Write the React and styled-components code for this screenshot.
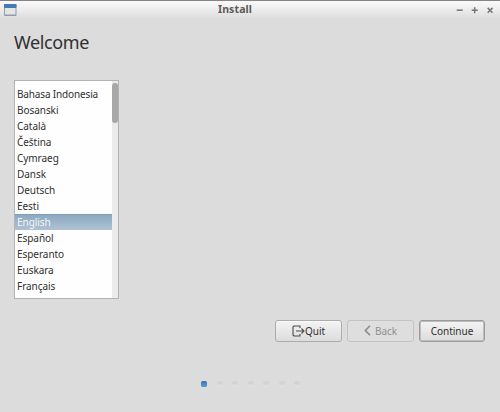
import React from 'react';
import styled, { createGlobalStyle } from 'styled-components';

const GlobalStyle = createGlobalStyle`
  * { box-sizing: border-box; }
  body { margin: 0; overflow: hidden; background: #dcdcdc; }
`;

const Window = styled.div`
  width: 500px;
  height: 412px;
  display: flex;
  flex-direction: column;
  background: #dcdcdc;
  color: #303030;
  font: 10px "Noto Sans", sans-serif;
  overflow: hidden;
`;

const TitleBar = styled.header`
  height: 19px;
  flex: none;
  display: grid;
  grid-template-columns: 50px 1fr 50px;
  align-items: center;
  padding-left: 4px;
  border-top: 1px solid #858383;
  background: linear-gradient(#fafafa, #ececec 50%, #dcdcdc);
`;

const Title = styled.div`
  text-align: center;
  font: 700 10.5px/16px "Noto Sans", sans-serif;
  letter-spacing: 0.1px;
  color: #5c5a5a;
  padding: 0 34px 2px 0;
`;

const Controls = styled.div`
  display: flex;
  justify-content: flex-end;
  padding: 0 5px 1px 0;
  gap: 5px;
`;

const Icon = styled.svg`
  display: block;
  flex: none;
  fill: none;
  stroke: ${(p) => p.$color || '#777'};
  stroke-width: ${(p) => p.$weight || 1.5};
`;

const Content = styled.main`
  flex: 1;
  display: flex;
  flex-direction: column;
  padding: 10px 15px 0 14px;
`;

const Heading = styled.h1`
  margin: 0;
  height: 51px;
  font: 400 18px/26px "Noto Sans", sans-serif;
  letter-spacing: -0.4px;
`;

const ListBox = styled.div`
  width: 105px;
  height: 219px;
  display: flex;
  overflow: hidden;
  background: #fefefe;
  border: 1px solid #b3b3b3;
`;

const Languages = styled.ul`
  width: 97px;
  margin: 0;
  padding: 5px 0 0;
  list-style: none;
`;

const Language = styled.li`
  height: 16px;
  padding-left: 2px;
  line-height: 16px;
  white-space: nowrap;
  letter-spacing: ${(p) => p.$spacing}px;
  color: ${(p) => (p.$selected ? '#f4f7f9' : '#303030')};
  background: ${(p) => (p.$selected ? 'linear-gradient(#8ba8bf, #afc2d3)' : 'none')};
  box-shadow: ${(p) => (p.$selected ? 'inset 0 1px #7f9db7' : 'none')};
`;

const ScrollTrack = styled.div`
  width: 6px;
  padding-top: 2px;
  background: #ebebeb;
`;

const ScrollThumb = styled.div`
  height: 40px;
  border-radius: 3px;
  background: #a7a7a7;
`;

const Actions = styled.div`
  display: flex;
  justify-content: flex-end;
  gap: 5px;
  margin-top: 21px;
`;

const Button = styled.button`
  width: ${(p) => p.$width}px;
  height: 22px;
  display: flex;
  align-items: center;
  justify-content: center;
  gap: ${(p) => p.$gap || 0}px;
  padding: 0 0 1px;
  font: 10px/14px "Noto Sans", sans-serif;
  color: #303030;
  border: 1px solid ${(p) => (p.$focused ? '#9b9b9b' : '#acacac')};
  border-radius: 3px;
  background: linear-gradient(#f4f4f4, #dcdcdc);
  box-shadow: ${(p) => (p.$focused ? 'inset 0 0 0 1px #bdbdbd' : 'inset 0 1px #fafafa')};
  &:disabled {
    color: #909090;
    border-color: #c3c3c3;
    background: #dedede;
    box-shadow: none;
  }
`;

const Progress = styled.div`
  display: flex;
  align-self: flex-start;
  gap: 9.5px;
  margin: 39px 0 0 187px;
`;

const Dot = styled.span`
  width: 6px;
  height: 6px;
  border-radius: ${(p) => (p.$active ? 1.5 : 3)}px;
  background: ${(p) =>
    p.$active ? 'linear-gradient(#3a74ab, #5c9bd4)' : 'linear-gradient(#d2d2d2 35%, #e4e4e4)'};
`;

const languages = [
  'Bahasa Indonesia', 'Bosanski', 'Català', 'Čeština', 'Cymraeg', 'Dansk', 'Deutsch',
  'Eesti', 'English', 'Español', 'Esperanto', 'Euskara', 'Français', 'Gaeilge',
];

const WindowIcon = () => (
  <Icon width="13" height="12" viewBox="0 0 13 12" $color="none">
    <rect x="0" y="0" width="12.5" height="12" rx="1" fill="#8d9bad" />
    <rect x="0" y="0" width="12.5" height="4" rx="1" fill="#457ab4" />
    <rect x="1" y="4" width="10.5" height="6.5" fill="#e5e5e3" />
  </Icon>
);

const ControlIcon = ({ d }) => (
  <Icon width="10" height="10" viewBox="0 0 10 10"><path d={d} /></Icon>
);

export default function App() {
  return (
    <>
      <GlobalStyle />
      <Window>
        <TitleBar>
          <WindowIcon />
          <Title>Install</Title>
          <Controls>
            <ControlIcon d="M1.7 5.2h6" />
            <ControlIcon d="M1.7 5.2h6M4.7 2.2v6" />
            <ControlIcon d="M2.7 2.9l4.8 4.8M7.5 2.9L2.7 7.7" />
          </Controls>
        </TitleBar>
        <Content>
          <Heading>Welcome</Heading>
          <ListBox>
            <Languages>
              {languages.map((name) => (
                <Language
                  key={name}
                  $selected={name === 'English'}
                  $spacing={name.length > 10 ? -0.15 : -0.05}
                >
                  {name}
                </Language>
              ))}
            </Languages>
            <ScrollTrack><ScrollThumb /></ScrollTrack>
          </ListBox>
          <Actions>
            <Button $width={67}>
              <Icon width="13" height="12" viewBox="0 0 13 12" $color="#4c4c4c" $weight={1.1}>
                <path d="M8 3V1H2L1 2v8l1 1h6V9M4 6h8M9.5 3.5L12 6 9.5 8.5" />
              </Icon>
              Quit
            </Button>
            <Button $width={67} $gap={4} disabled>
              <Icon width="7" height="11" viewBox="0 0 7 11" $color="#8a8a8a" $weight={1.6}>
                <path d="M6 .8L1.4 5.5 6 10.2" />
              </Icon>
              Back
            </Button>
            <Button $width={66} $focused>Continue</Button>
          </Actions>
          <Progress>
            {[0, 1, 2, 3, 4, 5, 6].map((step) => <Dot key={step} $active={step === 0} />)}
          </Progress>
        </Content>
      </Window>
    </>
  );
}
